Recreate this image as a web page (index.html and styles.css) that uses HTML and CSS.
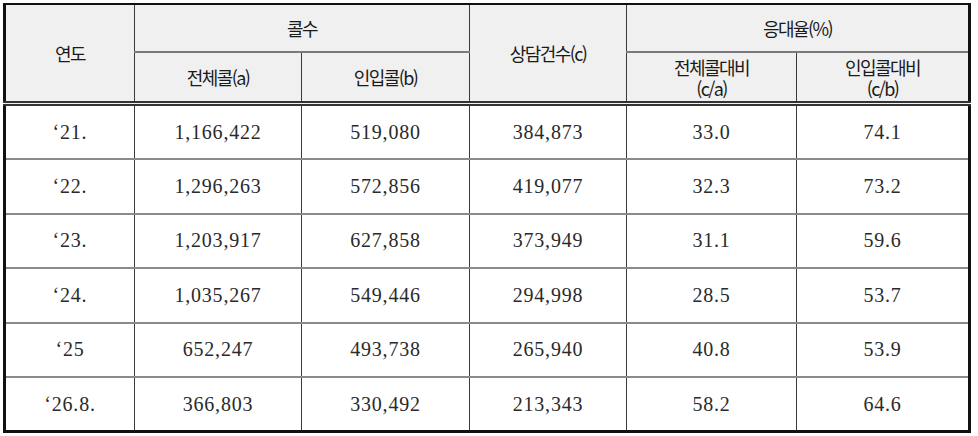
FILE: index.html
```html
<!DOCTYPE html>
<html lang="ko">
<head>
<meta charset="utf-8">
<link rel="stylesheet" href="styles.css">
</head>
<body>
<table class="stats">
  <colgroup>
    <col class="c-year">
    <col class="c-total">
    <col class="c-in">
    <col class="c-consult">
    <col class="c-rate1">
    <col class="c-rate2">
  </colgroup>
  <thead>
    <tr class="h1">
      <th rowspan="2">연도</th>
      <th colspan="2">콜수</th>
      <th rowspan="2">상담건수(c)</th>
      <th colspan="2">응대율(%)</th>
    </tr>
    <tr class="h2">
      <th>전체콜(a)</th>
      <th>인입콜(b)</th>
      <th class="two"><span class="ln">전체콜대비</span><span class="ln">(c/a)</span></th>
      <th class="two"><span class="ln">인입콜대비</span><span class="ln">(c/b)</span></th>
    </tr>
  </thead>
  <tbody>
    <tr><td>‘21.</td><td>1,166,422</td><td>519,080</td><td>384,873</td><td>33.0</td><td>74.1</td></tr>
    <tr><td>‘22.</td><td>1,296,263</td><td>572,856</td><td>419,077</td><td>32.3</td><td>73.2</td></tr>
    <tr><td>‘23.</td><td>1,203,917</td><td>627,858</td><td>373,949</td><td>31.1</td><td>59.6</td></tr>
    <tr><td>‘24.</td><td>1,035,267</td><td>549,446</td><td>294,998</td><td>28.5</td><td>53.7</td></tr>
    <tr><td>‘25</td><td>652,247</td><td>493,738</td><td>265,940</td><td>40.8</td><td>53.9</td></tr>
    <tr><td>‘26.8.</td><td>366,803</td><td>330,492</td><td>213,343</td><td>58.2</td><td>64.6</td></tr>
  </tbody>
</table>
</body>
</html>
```

FILE: styles.css
```css
html, body {
  margin: 0;
  padding: 0;
  background: #ffffff;
}

body {
  padding: 3px 0 0 3px;
}

.stats {
  border-collapse: collapse;
  table-layout: fixed;
  width: 968px;
  border-top: 2px solid #111;
  border-left: 3px solid #111;
  border-right: 3px solid #111;
  border-bottom: 3px solid #111;
}

.c-year { width: 130px; }
.c-total { width: 167px; }
.c-in { width: 168px; }
.c-consult { width: 157px; }
.c-rate1 { width: 170px; }
.c-rate2 { width: 173px; }

.stats th,
.stats td {
  padding: 0;
  text-align: center;
  vertical-align: middle;
  border-left: 1px solid #3a3a3a;
  border-right: 1px solid #3a3a3a;
}

.stats th {
  background: #f0f0f0;
  color: #1a1a1a;
  font-family: "Noto Sans CJK KR", "Noto Sans", sans-serif;
  font-weight: 400;
  font-size: 18px;
  letter-spacing: -1.6px;
  line-height: 21px;
}

.stats .h1 th {
  height: 46px;
  border-top: 2px solid #111;
}

.stats .h1 th[colspan] {
  border-bottom: 2px solid #7a7a7a;
}

.stats .h2 th {
  height: 47px;
}

.stats thead tr:last-child th,
.stats .h1 th[rowspan] {
  border-bottom: 5px double #333;
}

.stats .two {
  padding-top: 1px;
}

.stats .ln {
  display: block;
  height: 21px;
  line-height: 21px;
}

.stats td {
  height: 52.4px;
  color: #2a2a2a;
  font-family: "Liberation Serif", "DejaVu Serif", serif;
  font-size: 20px;
  letter-spacing: 0.8px;
  border-bottom: 2px solid #8a8a8a;
}

.stats tbody tr:last-child td {
  border-bottom: 3px solid #111;
}
```
